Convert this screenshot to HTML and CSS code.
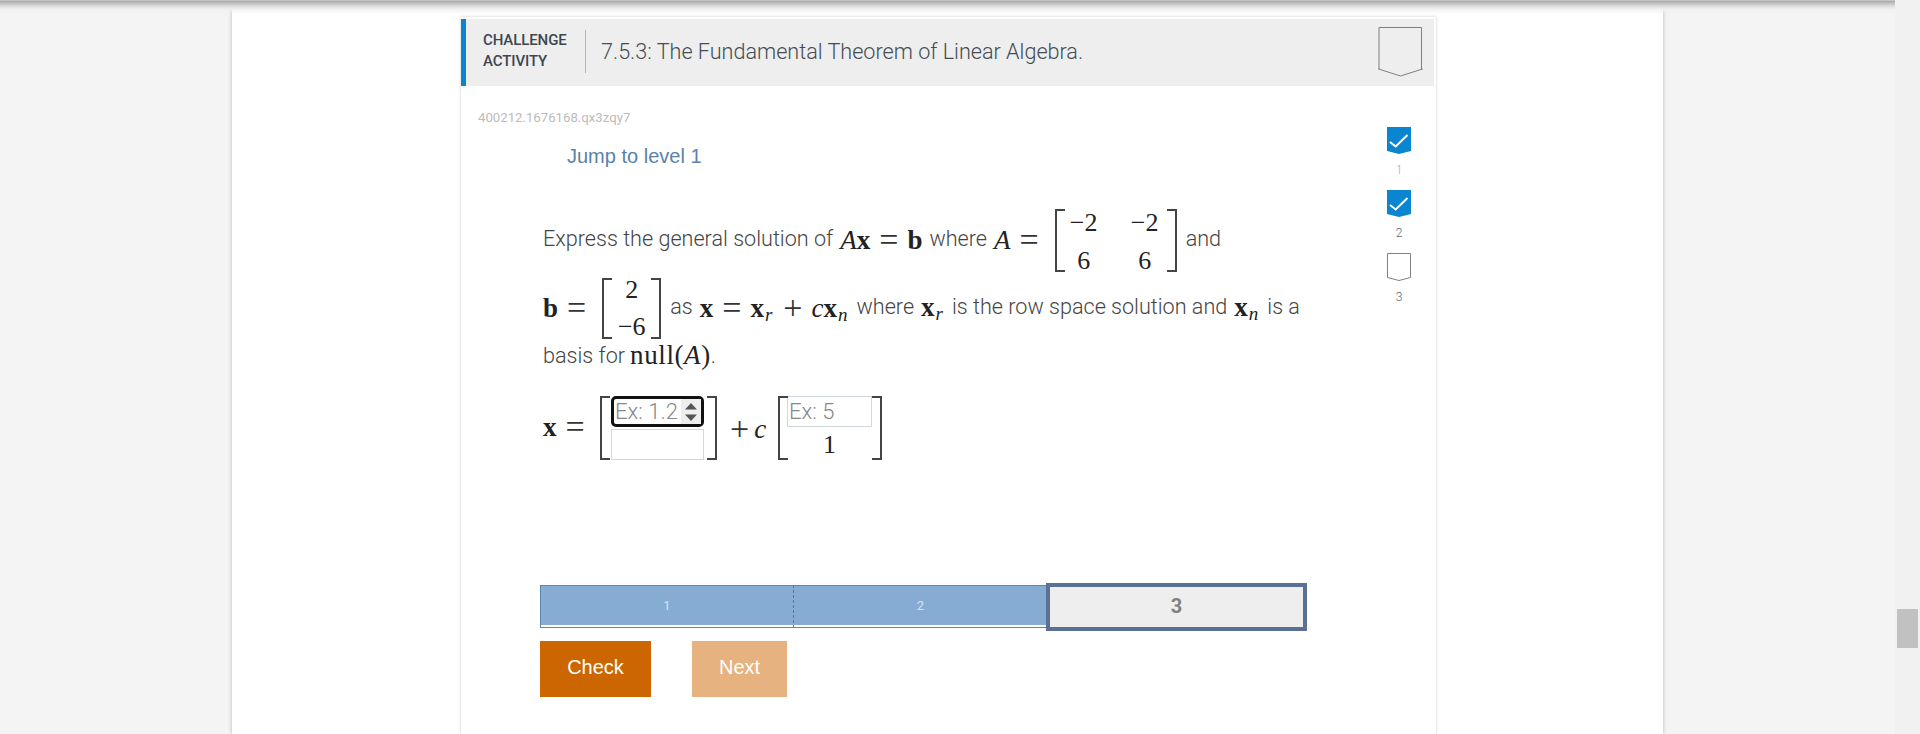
FILE: index.html
```html
<!DOCTYPE html>
<html lang="en">
<head>
<meta charset="utf-8">
<title>7.5.3: The Fundamental Theorem of Linear Algebra</title>
<link rel="stylesheet" href="styles.css">
</head>
<body>
<div class="top-shadow"></div>
<div class="viewport">
  <main class="page">
    <section class="card">
      <header class="card-head">
        <div class="kind">CHALLENGE<br>ACTIVITY</div>
        <h1 class="title">7.5.3: The Fundamental Theorem of Linear Algebra.</h1>
        <svg class="head-badge" width="45" height="50" viewBox="0 0 45 50"><path d="M1 .5H43.5V42L44.5 42L22.5 49L.5 42L1 42Z" fill="none" stroke="#7f7f7f" stroke-width="1"/></svg>
      </header>
      <div class="card-body">
        <div class="content">
          <div class="qid">400212.1676168.qx3zqy7</div>
          <div class="jump">Jump to level 1</div>

          <div class="line line-one">
            <span class="up">Express the general solution of</span>
            <span class="m up"><i>A</i><b>x</b><span class="rel">=</span><b>b</b></span>
            <span class="up">where</span>
            <span class="m up"><i>A</i><span class="rel">=</span></span>
            <span class="matrix mat-a">
              <span class="cell">−2</span><span class="cell">−2</span>
              <span class="cell">6</span><span class="cell">6</span>
            </span>
            <span class="up">and</span>
          </div>

          <div class="line line-two">
            <span class="m up"><b>b</b><span class="rel">=</span></span>
            <span class="matrix vec-b">
              <span class="cell">2</span>
              <span class="cell">−6</span>
            </span>
            <span class="up">as</span>
            <span class="m up"><b>x</b><span class="rel">=</span><b>x</b><sub><i>r</i></sub><span class="rel">+</span><i>c</i><b>x</b><sub><i>n</i></sub></span>
            <span class="up">where</span>
            <span class="m up"><b>x</b><sub><i>r</i></sub></span>
            <span class="up">is the row space solution and</span>
            <span class="m up"><b>x</b><sub><i>n</i></sub></span>
            <span class="up">is a</span>
          </div>

          <div class="line line-three">
            <span>basis for</span>
            <span class="m null">null(<i>A</i>)</span><span class="dot">.</span>
          </div>

          <div class="answer">
            <span class="m ans-x"><b>x</b><span class="rel">=</span></span>
            <span class="matrix ans-one">
              <span class="field focus">
                <input class="inp" type="text" placeholder="Ex: 1.2" aria-label="First entry">
                <span class="spin">
                  <svg width="12" height="18" viewBox="0 0 12 18"><path d="M6 0L12 6.5H0ZM0 11.5H12L6 18Z" fill="#555"/></svg>
                </span>
              </span>
              <span class="field"><input class="inp" type="text" aria-label="Second entry"></span>
            </span>
            <span class="m plus-c"><span class="rel">+</span><i>c</i></span>
            <span class="matrix ans-two">
              <span class="field narrow"><input class="inp" type="text" placeholder="Ex: 5" aria-label="Basis entry"></span>
              <span class="cell one">1</span>
            </span>
          </div>

          <div class="progress">
            <div class="seg seg-dash">1</div>
            <div class="seg">2</div>
            <div class="seg-current">3</div>
          </div>

          <div class="actions">
            <button class="btn check" type="button">Check</button>
            <button class="btn next" type="button">Next</button>
          </div>
        </div>

        <aside class="levels">
          <div class="level">
            <svg width="24" height="27" viewBox="0 0 24 27"><path d="M0 0H24V24L12 27L0 24Z" fill="#0a86d1"/><path d="M3 15L8.7 19.5L20.5 8" fill="none" stroke="#fff" stroke-width="2"/></svg>
            <span class="lv-num pale">1</span>
          </div>
          <div class="level">
            <svg width="24" height="27" viewBox="0 0 24 27"><path d="M0 0H24V24L12 27L0 24Z" fill="#0a86d1"/><path d="M3 15L8.7 19.5L20.5 8" fill="none" stroke="#fff" stroke-width="2"/></svg>
            <span class="lv-num">2</span>
          </div>
          <div class="level">
            <svg width="24" height="28" viewBox="0 0 24 28"><path d="M.5.5H23.5V24.5L12 27.5L.5 24.5Z" fill="#fff" stroke="#7f7f7f"/></svg>
            <span class="lv-num">3</span>
          </div>
        </aside>
      </div>
    </section>
  </main>
  <div class="scrollbar"><div class="thumb"></div></div>
</div>
</body>
</html>
```

FILE: styles.css
```css
* { box-sizing: border-box; }
html, body { margin: 0; height: 734px; overflow: hidden; }
body { background: #f4f4f4; font-family: Roboto, "Liberation Sans", sans-serif; color: #444; position: relative; }

.top-shadow {
  position: absolute; left: 0; top: 0; width: 1895px; height: 14px;
  background: linear-gradient(#e0e0e0 0, #a8a8a8 1px, #bdbdbd 3px, #dcdcdc 6px, #f0f0f0 9px, rgba(245,245,245,0) 14px);
  z-index: 3;
}
.viewport { display: flex; height: 734px; }
.page {
  width: 1431px; margin-left: 232px; margin-right: 232px; height: 734px; flex: none;
  background: #fff; box-shadow: 0 0 4px rgba(0,0,0,.25);
  padding: 17px 0 0 229px;
}
.scrollbar { width: 25px; flex: none; background: #f1f1f1; padding: 609px 2px 0 2px; }
.thumb { width: 21px; height: 39px; background: #c1c1c1; }

.card {
  width: 975px; height: 717px; background: #fff;
  box-shadow: 0 0 3px rgba(0,0,0,.2);
  padding-top: 2px;
}
.card-head {
  height: 67px; margin-right: 2px; background: #eee; border-left: 5px solid #0a86d1;
  display: flex; align-items: center; padding-left: 17px;
}
.kind {
  width: 103px; height: 43px; border-right: 1px solid #b5b5b5;
  font-size: 15px; font-weight: 500; line-height: 21px; color: #3c4650;
  margin-top: -2px; letter-spacing: -.1px;
}
.title { margin: -2px 0 0 15px; font-size: 21.6px; font-weight: 300; color: #444c54; width: 777px; white-space: nowrap; }
.head-badge { margin-top: -2px; }

.card-body { display: flex; }
.content { width: 910px; flex: none; padding-left: 17px; }
.qid { margin-top: 25px; font-size: 13.2px; line-height: 14px; color: #bbb; font-weight: 400; }
.jump { margin: 19px 0 0 89px; font: 20px/24px "Liberation Sans", sans-serif; color: #5a82aa; }

.line { display: flex; align-items: center; gap: 7px; padding-left: 65px; font-size: 21.6px; font-weight: 300; color: #444; white-space: nowrap; }
.line-one { height: 63px; margin-top: 41px; }
.line-two { height: 61px; margin-top: 6px; }
.line-three { height: 32px; margin-top: 0; }
.up { position: relative; top: -2px; }
.dot { margin-left: -7px; }

.m { font: 27px/30px "Liberation Serif", serif; color: #222; display: inline-flex; align-items: baseline; }
.m b { font-weight: 700; }
.m i { font-style: italic; }
.m sub { font-size: 19px; line-height: 1; vertical-align: baseline; position: relative; top: 4px; padding: 0 2px 0 1px; }
.rel { margin: 0 9px; font-size: 34px; font-weight: 400; color: #333; position: relative; top: 2px; }
.null { margin-left: -2px; letter-spacing: .6px; }

.matrix { display: inline-grid; position: relative; font: 26px/30px "Liberation Serif", serif; color: #222; align-items: center; justify-items: center; }
.matrix::before, .matrix::after {
  content: ""; position: absolute; top: 0; bottom: 0; width: 8px;
  border: 2px solid #444;
}
.matrix::before { left: 0; border-right: 0; }
.matrix::after { right: 0; border-left: 0; }
.mat-a { width: 122px; height: 63px; margin-right: 2px; padding: 3px 0 0 4px; grid-template-columns: 50px 50px; grid-template-rows: 30px 30px; column-gap: 11px; row-gap: 8px; justify-content: start; align-content: center; }
.vec-b { width: 59px; height: 61px; margin-right: 2px; padding: 0 3px; grid-template-columns: 1fr; grid-template-rows: 30px 30px; row-gap: 7px; align-content: center; }
.cell { line-height: 30px; }

.answer { display: flex; align-items: center; height: 64px; margin-top: 25px; padding-left: 65px; }
.ans-x { width: 57px; margin-top: -4px; }
.ans-one { width: 117px; height: 64px; padding: 0 13px 0 11px; grid-template-rows: 31px 31px; row-gap: 2px; justify-items: stretch; }
.plus-c { width: 61px; padding-left: 13px; }
.plus-c .rel { margin: 0 5px 0 0; }
.ans-two { width: 104px; height: 64px; padding: 0 10px 0 9px; grid-template-rows: 31px 31px; row-gap: 2px; justify-items: stretch; }
.one { text-align: center; font-size: 26px; }

.field { display: flex; height: 31px; border: 1px solid #cfd8dc; background: #fff; }
.field.focus { border: 3px solid #111; border-radius: 5px; background: #fff; }
.inp { flex: 1; min-width: 0; width: 100%; border: 0; outline: 0; padding: 0 1px; background: transparent; font: 300 22px Roboto, sans-serif; color: #444; }
.inp::placeholder { color: #888; opacity: 1; }
.spin { width: 20px; flex: none; background: #eee; display: flex; align-items: center; justify-content: center; }

.progress { display: flex; align-items: center; width: 767px; margin-top: 123px; margin-left: 62px; height: 48px; }
.seg { width: 253px; height: 43px; margin-top: -2px; background: #87acd3; border-top: 1px solid #5b86b0; border-bottom: 1px solid #5b86b0; box-shadow: inset 0 -2px 0 #fff; color: #d5e2ef; font: 13px/39px Roboto, sans-serif; text-align: center; }
.seg-dash { border-left: 1px solid #5b86b0; border-right: 1px dashed #4f7aa5; width: 254px; }
.seg-current { width: 261px; height: 48px; margin-left: -1px; background: #eee; border: 4px solid #5a7095; color: #808080; font: 700 20px/38px Roboto, sans-serif; text-align: center; }

.actions { display: flex; gap: 41px; margin-top: 10px; margin-left: 62px; }
.btn { height: 56px; border: 0; padding: 0 0 4px; color: #fff; font: 20px "Liberation Sans", sans-serif; }
.check { width: 111px; background: #cc6600; }
.next { width: 95px; background: #e6b280; }

.levels { width: 56px; flex: none; display: flex; flex-direction: column; align-items: center; padding-top: 41px; }
.level { height: 63px; display: flex; flex-direction: column; align-items: center; }
.level svg { display: block; flex: none; }
.lv-num { margin-top: 9px; font-size: 12px; line-height: 14px; color: #666; font-weight: 300; }
.lv-num.pale { color: #aaa; }
```
